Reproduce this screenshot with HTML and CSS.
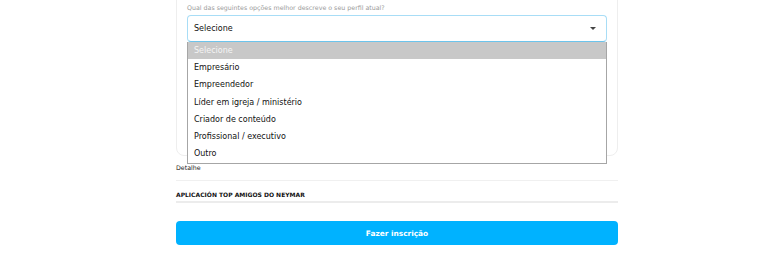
FILE: index.html
```html
<!DOCTYPE html>
<html lang="pt">
<head>
    <meta charset="UTF-8">
    <title>Inscrição</title>
    <link rel="stylesheet" href="styles.css">
</head>
<body>
    <div class="formulario">
        <div class="cartao">
            <label class="rotulo">Qual das seguintes opções melhor descreve o seu perfil atual?</label>
            <div class="campo-select">
                <div class="select-caixa">
                    <span>Selecione</span>
                    <span class="seta"></span>
                </div>
                <ul class="lista-opcoes">
                    <li class="ativa">Selecione</li>
                    <li>Empresário</li>
                    <li>Empreendedor</li>
                    <li>Líder em igreja / ministério</li>
                    <li>Criador de conteúdo</li>
                    <li>Profissional / executivo</li>
                    <li>Outro</li>
                </ul>
            </div>
        </div>

        <div class="detalhe">Detalhe</div>
        <div class="titulo-secao">APLICACIÓN TOP AMIGOS DO NEYMAR</div>

        <button class="botao">Fazer inscrição</button>
    </div>
</body>
</html>
```

FILE: styles.css
```css
body {
    margin: 0;
    font-family: 'DejaVu Sans', 'Noto Sans', sans-serif;
    background: #fff;
    color: #111;
}

.formulario {
    width: 442px;
    margin-left: 176px;
}

.cartao {
    height: 166px;
    margin-top: -10px;
    padding: 12px 10px 0;
    box-sizing: border-box;
    border: 1px solid #eeeeee;
    border-radius: 0 0 8px 8px;
}

.rotulo {
    display: block;
    font-size: 6.3px;
    color: #9a9a9a;
    height: 10px;
    line-height: 10px;
    margin-bottom: 2px;
}

.campo-select {
    position: relative;
}

.select-caixa {
    height: 27px;
    box-sizing: border-box;
    border: 1px solid #a8ddf6;
    border-bottom-color: #6cc4ec;
    border-radius: 4px;
    display: flex;
    align-items: center;
    justify-content: space-between;
    padding: 0 10px 0 6px;
    font-size: 8px;
    color: #111;
}

.seta {
    width: 0;
    height: 0;
    border-left: 3px solid transparent;
    border-right: 3px solid transparent;
    border-top: 3px solid #444;
}

/* lista aberta por cima do resto */
.lista-opcoes {
    position: absolute;
    top: 27px;
    left: 0;
    right: 0;
    margin: 0;
    padding: 0 0 1px;
    list-style: none;
    background: #fff;
    border: 1px solid #a6a6a6;
    border-top: none;
    z-index: 5;
}

.lista-opcoes li {
    height: 17.2px;
    line-height: 17.2px;
    padding-left: 6px;
    font-size: 8px;
    color: #111;
}

.lista-opcoes li.ativa {
    background: #c8c8c8;
    color: #f4f4f4;
}

.detalhe {
    font-size: 6.3px;
    line-height: 8px;
    color: #222;
    padding: 8px 0 8px;
    border-bottom: 1px solid #f0f0f0;
}

.titulo-secao {
    font-size: 6px;
    line-height: 8px;
    font-weight: 700;
    color: #111;
    padding: 10px 0 2px;
    border-bottom: 2px solid #ececec;
}

.botao {
    display: block;
    width: 100%;
    height: 24px;
    margin-top: 18px;
    border: none;
    border-radius: 4px;
    background: #00b2ff;
    color: #fff;
    font-family: inherit;
    font-size: 7.4px;
    font-weight: 700;
    cursor: pointer;
}
```
